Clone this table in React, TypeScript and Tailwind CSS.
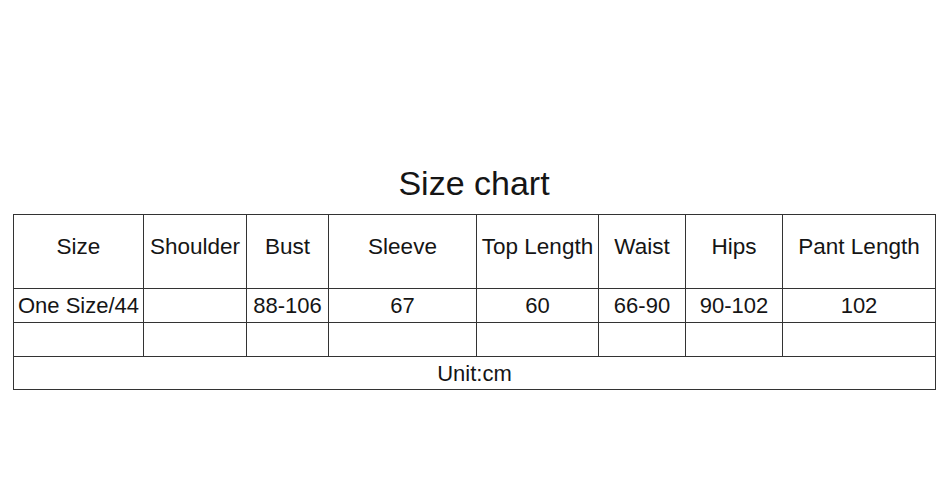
const columns = [
  { label: 'Size', width: 'w-[130px]' },
  { label: 'Shoulder', width: 'w-[103px]' },
  { label: 'Bust', width: 'w-[82px]' },
  { label: 'Sleeve', width: 'w-[148px]' },
  { label: 'Top Length', width: 'w-[122px]' },
  { label: 'Waist', width: 'w-[87px]' },
  { label: 'Hips', width: 'w-[97px]' },
  { label: 'Pant Length', width: 'w-[153px]' },
];

const rows = [
  ['One Size/44', '', '88-106', '67', '60', '66-90', '90-102', '102'],
  ['', '', '', '', '', '', '', ''],
];

export default function App() {
  return (
    <div
      className="w-[948px] h-[503px] bg-white text-[#151515] overflow-hidden"
      style={{ fontFamily: '"Liberation Sans", Arial, sans-serif' }}
    >
      <div className="pt-[166px] flex flex-col">
        {/* Title */}
        <h1 className="text-center text-[34px] leading-none font-normal">Size chart</h1>

        {/* Table */}
        <div className="mt-[14px] ml-[13px] w-[923px] border-l border-t border-[#333]">
          {/* Header */}
          <div className="flex">
            {columns.map((col) => (
              <div
                key={col.label}
                className={`${col.width} h-[74px] border-r border-b border-[#333] flex items-center justify-center pb-[8px] text-[22.5px] leading-none whitespace-nowrap`}
              >
                {col.label}
              </div>
            ))}
          </div>

          {/* Data rows */}
          {rows.map((row, r) => (
            <div key={r} className="flex">
              {row.map((value, c) => (
                <div
                  key={c}
                  className={`${columns[c].width} h-[34px] border-r border-b border-[#333] flex items-center justify-center pt-[1px] text-[22px] leading-none whitespace-nowrap`}
                >
                  {value}
                </div>
              ))}
            </div>
          ))}

          {/* Unit row */}
          <div className="h-[33px] border-r border-b border-[#333] flex items-center justify-center pt-[1px] text-[22px] leading-none">
            Unit:cm
          </div>
        </div>
      </div>
    </div>
  );
}
